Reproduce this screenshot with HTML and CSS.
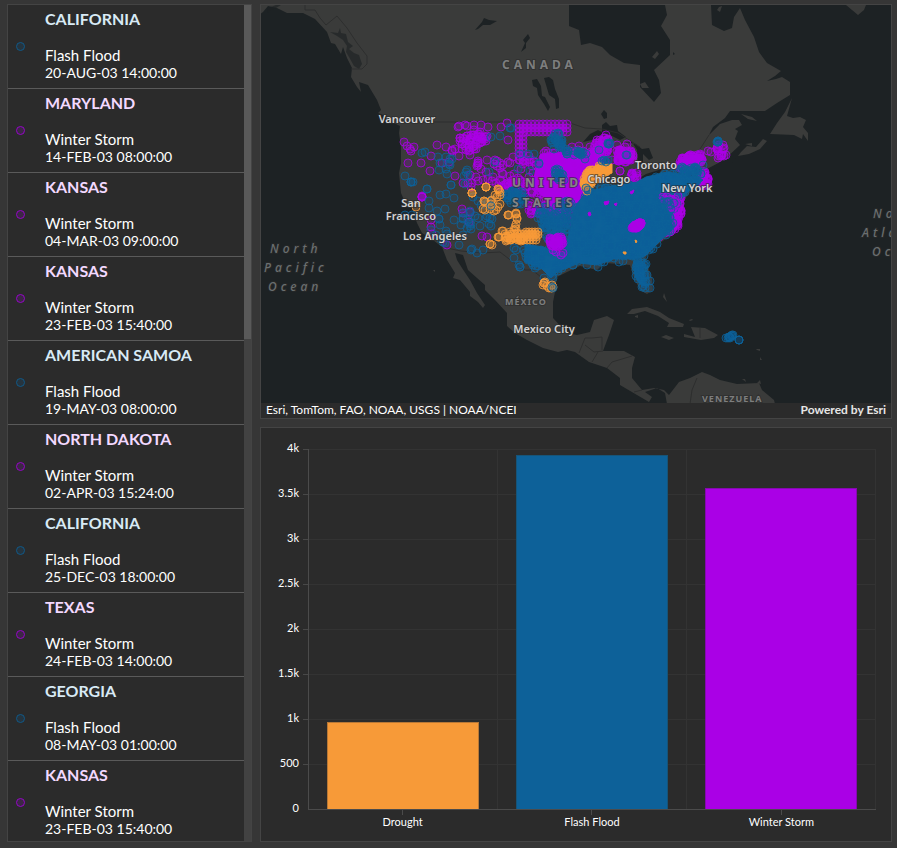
FILE: index.html
```html
<!DOCTYPE html>
<html lang="en">
<head>
<meta charset="utf-8">
<meta name="viewport" content="width=device-width, initial-scale=1">
<title>Storm Events</title>
<link rel="stylesheet" href="styles.css">
</head>
<body>
<main class="dashboard">
  <section class="panel events" aria-label="Events">
    <ul class="event-list">
      <li class="event flood"><span class="marker"></span><div><h2>CALIFORNIA</h2><p>Flash Flood</p><p class="date">20-AUG-03 14:00:00</p></div></li>
      <li class="event winter"><span class="marker"></span><div><h2>MARYLAND</h2><p>Winter Storm</p><p class="date">14-FEB-03 08:00:00</p></div></li>
      <li class="event winter"><span class="marker"></span><div><h2>KANSAS</h2><p>Winter Storm</p><p class="date">04-MAR-03 09:00:00</p></div></li>
      <li class="event winter"><span class="marker"></span><div><h2>KANSAS</h2><p>Winter Storm</p><p class="date">23-FEB-03 15:40:00</p></div></li>
      <li class="event flood"><span class="marker"></span><div><h2>AMERICAN SAMOA</h2><p>Flash Flood</p><p class="date">19-MAY-03 08:00:00</p></div></li>
      <li class="event winter"><span class="marker"></span><div><h2>NORTH DAKOTA</h2><p>Winter Storm</p><p class="date">02-APR-03 15:24:00</p></div></li>
      <li class="event flood"><span class="marker"></span><div><h2>CALIFORNIA</h2><p>Flash Flood</p><p class="date">25-DEC-03 18:00:00</p></div></li>
      <li class="event winter"><span class="marker"></span><div><h2>TEXAS</h2><p>Winter Storm</p><p class="date">24-FEB-03 14:00:00</p></div></li>
      <li class="event flood"><span class="marker"></span><div><h2>GEORGIA</h2><p>Flash Flood</p><p class="date">08-MAY-03 01:00:00</p></div></li>
      <li class="event winter"><span class="marker"></span><div><h2>KANSAS</h2><p>Winter Storm</p><p class="date">23-FEB-03 15:40:00</p></div></li>
    </ul>
    <div class="scroll-track"><div class="scroll-thumb"></div></div>
  </section>

  <section class="panel map" aria-label="Map">
    <svg class="map-view" viewBox="261 5 630 398" preserveAspectRatio="xMidYMid slice" role="img" aria-label="Storm events across North America">
      <g class="land">
        <path d="M250 5V22L263 12L268 6L277 8L287 13L303 13L315 19L327 32L331 43L335 44L341 54L343 47L347 58L352 68L351 77L357 87L361 92L359 82L368 85L377 100L381 110L378 113L386 116L392 122L400 126L399 133L401 147L401 163L399 173L401 193L407 207L412 208L417 223L422 233L433 240L442 247L447 260L455 273L453 278L460 280L470 292L470 296L478 302L483 308L485 305L477 293L470 280L462 268L457 260L455 253L463 255L468 270L477 278L485 285L485 290L495 300L507 313L507 326L515 333L527 340L543 348L558 352L567 350L575 352L589 362L607 368L620 378L620 385L637 395L649 402L652 397L645 392L657 388L665 393L667 404H775L774 400L762 390L759 383L737 384L720 380L710 375L702 372L690 378L679 382L669 395L664 390L654 388L642 390L632 378L632 368L635 357L624 351L603 351L609 335L614 320L607 316L594 320L590 332L577 335L567 333L553 318L553 302L555 292L557 277L567 272L580 266L597 270L604 263L620 264L630 265L634 278L640 290L647 294L653 290L652 278L647 265L646 257L657 245L667 238L677 230L683 208L684 200L692 190L712 183L705 170L724 160L740 145L735 139L738 131L735 129L742 125L739 120L732 120L720 124L709 135L713 127L725 118L730 111L765 111L777 103L790 95L790 82L782 77L776 79L767 81L775 76L781 71L767 63L759 52L754 37L745 20L740 8L734 17L732 28L724 31L712 25L711 5H665L667 15L661 26L670 40L670 55L654 70L659 80L661 93L654 102L640 87V65L624 63L610 55L602 47L590 43L581 45L579 30L569 26V5Z"/>
        <path d="M732 164L738 156L749 154L760 149L767 141L763 139L756 147L747 146L741 152ZM745 144L752 146L752 143ZM741 114L752 117L757 121L748 119ZM792 98L785 112L777 123L770 134L794 135L802 139L803 134L808 141V133L803 127L806 120L800 117L793 118L787 116ZM846 5L858 15L864 10L866 5ZM719 7L722 6L720 12L717 10ZM652 57L657 51L659 54L655 59ZM640 84L645 82L649 88L642 88ZM600 114l3-4 4 1v6l-4 2z"/>
        <path d="M627 314L632 309L647 307L660 312L669 318L684 324L683 327L667 327L669 323L658 316L645 311L634 314ZM661 337L666 335L674 338L669 340ZM684 334L695 337L691 327L705 328L718 335L714 338L701 340L684 337ZM635 316l3-1v3l-3-1zM663 297l1-4 3 9zM689 320l3-1 1 1-3 1zM756 349l4 0 0 2-3-1zM760 357l2 3-2 0zM433 270l2 0v2zM742 379l3 0 1 3zM757 383l3-3 1 4z"/>
      </g>
      <g class="water">
        <path d="M475 30L482 22L484 18L489 20L497 21L490 25L483 25L478 29ZM521 52L525 43L523 40L528 34L530 38L526 43L526 48ZM532 80L537 79L541 86L542 96L545 97L550 107L548 111L544 104L538 95L537 88L533 86ZM544 78L549 77L553 80L555 89L559 99V108L556 109L555 99L549 95Z"/>
        <path d="M583 142L590 134L598 130L602 132L602 125L606 122L610 126L617 125L618 131L626 137L620 140L610 135L600 136L592 140ZM621 142L636 144L642 149L649 148L653 158L649 160L643 154L643 164L638 164L637 150L632 142ZM638 179L646 174L662 169L658 175L645 182ZM601 114l3-4 3 3v5l-3 1zM673 52l2 2-2 1z"/>
        <path d="M268 8l8-3 5 0-5 3-5 2-4 3zM330 32l8 1 2-5 1 5 5 1 2 8 5 4-4 3 5 4 5 2 3 9-3 5-5-3-5-9-3-5 1-6-4-6-6-4z" opacity=".65"/>
      </g>
      <g class="borders">
        <path d="M305 5V10L315 10L320 18L326 25L337 16L347 28L357 43L367 56V64L362 69H351M400 122H567L585 128L602 129L618 133L640 147M442 247L461 251L482 253L500 252L513 262L525 270L532 270L545 280L555 291M579 353L585 338H592L602 337V350M585 345L594 352L603 351M607 368L612 362L632 356M592 362L598 352M690 404L692 390L697 378M700 328V338M709 135L693 160L675 160M642 390L634 392"/>
      </g>
      <g class="points" id="points"></g>
      <g class="labels">
        <g class="country">
          <text x="502" y="69">CANADA</text>
          <text x="512" y="187" class="us">UNITED</text>
          <text x="512" y="207" class="us">STATES</text>
        </g>
        <g class="country small"><text x="505" y="305">MÉXICO</text><text x="702" y="402">VENEZUELA</text></g>
        <g class="city">
          <text x="407" y="123">Vancouver</text><text x="411" y="207">San</text><text x="411" y="220">Francisco</text>
          <text x="435" y="240">Los Angeles</text><text x="609" y="183">Chicago</text><text x="656" y="169">Toronto</text>
          <text x="687" y="192">New York</text><text x="544" y="333">Mexico City</text>
        </g>
        <g class="ocean">
          <text x="270" y="253">North</text><text x="264" y="272">Pacific</text><text x="268" y="291">Ocean</text>
          <text x="873" y="218">North</text><text x="862" y="237">Atlantic</text><text x="872" y="256">Ocean</text>
        </g>
      </g>
    </svg>
    <footer class="attribution"><span>Esri, TomTom, FAO, NOAA, USGS | NOAA/NCEI</span><span class="powered">Powered by Esri</span></footer>
  </section>

  <section class="panel chart" aria-label="Events by type">
    <div class="y-labels"><span>4k</span><span>3.5k</span><span>3k</span><span>2.5k</span><span>2k</span><span>1.5k</span><span>1k</span><span>500</span><span>0</span></div>
    <div class="plot">
      <div class="gridlines"><i></i><i></i><i></i><i></i><i></i><i></i><i></i><i></i></div>
      <div class="bars">
        <div class="slot"><div class="bar drought" style="height:24.3%"></div></div>
        <div class="slot"><div class="bar flood" style="height:98.4%"></div></div>
        <div class="slot"><div class="bar winter" style="height:89.2%"></div></div>
      </div>
    </div>
    <div class="x-labels"><span>Drought</span><span>Flash Flood</span><span>Winter Storm</span></div>
  </section>
</main>
<script src="map.js"></script>
</body>
</html>
```
FILE: styles.css
```css
* { box-sizing: border-box; }

body {
  margin: 0;
  background: #363636;
  color: #fff;
  font-family: Lato, "Liberation Sans", sans-serif;
}

.dashboard {
  display: grid;
  grid-template-columns: 245px minmax(0, 1fr);
  grid-template-rows: minmax(0, 1fr) minmax(0, 1fr);
  gap: 8px;
  height: 100vh;
  padding: 4px 5px 6px 7px;
}

.panel {
  background: #2b2b2b;
  border: 1px solid #444;
  overflow: hidden;
}

.events {
  grid-row: 1 / 3;
  display: flex;
}

.event-list {
  flex: 1;
  margin: 0;
  padding: 0;
  list-style: none;
}

.event {
  display: flex;
  align-items: center;
  gap: 20px;
  padding: 5px 8px 6px;
  border-bottom: 1px solid #5a5a5a;
  font-size: 15px;
  line-height: 18px;
}

.event h2 {
  margin: 0 0 18px;
  font-size: 16px;
  font-weight: 700;
  line-height: 18px;
}

.event p { margin: 0; }
.event .date { font-size: 14px; }

.marker {
  width: 9px;
  height: 9px;
  border: 1px solid;
  border-radius: 50%;
}

.event.flood h2 { color: #d8eaf5; }
.event.winter h2 { color: #f3d9ff; }
.event.flood .marker { border-color: #105988; background: #26343e; }
.event.winter .marker { border-color: #9605c9; background: #3c2745; }

.scroll-track {
  width: 7px;
  background: #424242;
}

.scroll-thumb {
  height: 40%;
  background: #595959;
}

.map {
  display: flex;
  flex-direction: column;
  background: #1d2224;
}

.map-view {
  display: block;
  flex: 1;
  width: 100%;
  min-height: 0;
}

.land { fill: #3a3b3a; }
.water { fill: #1d2224; }
.borders { fill: none; stroke: #2d2e2e; stroke-width: 1; }

.points circle { fill-opacity: 0.18; stroke-width: 1; stroke-opacity: 0.8; }
.points .flood { fill: #0d6199; stroke: #0d6199; }
.points .winter { fill: #aa00e6; stroke: #aa00e6; }
.points .drought { fill: #f79a38; stroke: #f79a38; }
.points path { stroke: none; }

.labels { font-family: "Noto Sans", "Open Sans", sans-serif; }
.labels text { paint-order: stroke; stroke: #2b2b2b; stroke-width: 2px; stroke-opacity: 0.6; }
.country { fill: #7d7e7e; font-size: 12px; font-weight: 700; letter-spacing: 4px; }
.country .us { fill: #858585; }
.country.small { font-size: 9px; letter-spacing: 1px; }
.city { fill: #d4d4d4; font-size: 11px; font-weight: 600; text-anchor: middle; }
.ocean { fill: #6b6f70; font-size: 12px; font-style: italic; font-weight: 500; letter-spacing: 4px; }

.attribution {
  display: flex;
  justify-content: space-between;
  padding: 0 5px 1px;
  background: #2b2b2b;
  font-size: 12px;
  line-height: 14px;
}

.powered { font-weight: 700; color: #e6e6e6; }

.chart {
  display: grid;
  grid-template-columns: 47px minmax(0, 1fr);
  grid-template-rows: minmax(0, 1fr) auto;
  padding: 21px 15px 8px 0;
  font-size: 11px;
}

.y-labels {
  display: flex;
  flex-direction: column;
  justify-content: space-between;
  margin: -9px 9px -6px 0;
  line-height: 16px;
  text-align: right;
}

.plot {
  display: grid;
  border-left: 1px solid #4b4b4b;
  border-bottom: 1px solid #4b4b4b;
}

.gridlines, .bars { grid-area: 1 / 1; display: grid; }

.gridlines i {
  position: relative;
  border-top: 1px solid #333;
}

.gridlines i::before {
  content: "";
  position: absolute;
  top: -1px;
  left: -6px;
  width: 5px;
  height: 1px;
  background: #484848;
}

.bars { grid-template-columns: repeat(3, 1fr); z-index: 1; }

.slot {
  display: flex;
  align-items: flex-end;
  justify-content: center;
  border-right: 1px solid #333;
}

.bar { width: 81%; border: 1px solid; border-bottom: 0; }
.bar.drought { background: #f79a38; border-color: #b87836; }
.bar.flood { background: #0d6199; border-color: #165478; }
.bar.winter { background: #aa00e6; border-color: #8509af; }

.x-labels {
  grid-column: 2;
  display: grid;
  grid-template-columns: repeat(3, 1fr);
  line-height: 18px;
  text-align: center;
}

.x-labels span { padding-bottom: 2px; }

.x-labels span::before {
  content: "";
  display: block;
  width: 1px;
  height: 5px;
  margin: 0 auto -2px;
  background: #4b4b4b;
}
```
FILE: map.js
```js
const layer = document.getElementById("points");
const NS = "http://www.w3.org/2000/svg";

// Small deterministic generator so that the dots keep their places.
let seed = 7;
const rand = () => (seed = (seed * 16807) % 2147483647) / 2147483647;

function dot(kind, x, y) {
  const c = document.createElementNS(NS, "circle");
  c.setAttribute("class", kind);
  c.setAttribute("cx", x);
  c.setAttribute("cy", y);
  c.setAttribute("r", 4);
  layer.appendChild(c);
}

function pairs(text) {
  return text.split(" ").map(p => p.split(",").map(Number));
}

function inside(x, y, poly) {
  let hit = false;
  for (let i = 0, j = poly.length - 1; i < poly.length; j = i++) {
    const [xi, yi] = poly[i], [xj, yj] = poly[j];
    if ((yi > y) !== (yj > y) && x < (xj - xi) * (y - yi) / (yj - yi) + xi) hit = !hit;
  }
  return hit;
}

// Scatters `count` dots through a polygon.
function scatter(kind, text, count) {
  const poly = pairs(text);
  const xs = poly.map(p => p[0]), ys = poly.map(p => p[1]);
  const x0 = Math.min(...xs), w = Math.max(...xs) - x0;
  const y0 = Math.min(...ys), h = Math.max(...ys) - y0;
  for (let n = 0, tries = 0; n < count && tries < 20000; tries++) {
    const x = Math.round(x0 + rand() * w), y = Math.round(y0 + rand() * h);
    if (inside(x, y, poly)) { dot(kind, x, y); n++; }
  }
}

function solid(kind, text) {
  const p = document.createElementNS(NS, "path");
  p.setAttribute("class", kind);
  p.setAttribute("d", "M" + text.replace(/ /g, "L") + "Z");
  layer.appendChild(p);
}

function lattice(kind, x0, y0, x1, y1, step) {
  for (let y = y0; y <= y1; y += step) for (let x = x0; x <= x1; x += step) dot(kind, x, y);
}

const dots = (kind, text) => pairs(text).forEach(([x, y]) => dot(kind, x, y));

// Winter storms
dots("winter", "404,142 407,146 410,149 414,147 411,151 437,145 408,163 421,163 431,156 430,171 446,147 452,150 455,149 442,163 449,162 455,176 487,160 494,164 500,163 478,163 477,166 486,172 500,168 503,174 508,162 501,127 507,123 508,140 476,177 470,175 468,183 463,183 478,181 493,177 422,197 422,197 422,196 422,197 422,197 431,220 431,227 432,234 447,245 462,209 463,213 469,222 482,236 487,237 470,212 520,160 513,157 510,163 458,127 459,126 465,125 467,126 474,125 481,125 488,127 474,130 460,138 452,151 459,156");
scatter("winter", "468,134 482,130 490,135 487,142 479,144 478,153 467,158 462,152 458,148 460,137", 50);
dots("winter", "478,161 478,165 495,160 497,161 503,165 497,166 502,173 472,183 471,187 478,163 481,169");
lattice("winter", 519, 124, 568, 135, 4);
lattice("winter", 519, 136, 526, 163, 4);
solid("winter", "541,154 570,152 600,149 604,160 590,180 582,195 575,213 568,203 548,202 537,190 532,184 537,167");
scatter("winter", "516,162 541,150 573,144 603,149 603,163 582,193 575,215 540,216 528,195 505,186 510,172 525,175", 215);
scatter("winter", "478,178 515,180 518,192 500,188", 18);
scatter("winter", "526,200 548,200 575,222 560,226 545,212 530,215", 50);
scatter("winter", "595,139 608,136 610,145 607,156 594,154", 40);
scatter("winter", "617,151 622,148 632,150 634,159 625,163 618,161", 65);
scatter("winter", "630,172 638,172 638,181 630,181", 12);
dots("winter", "606,135 604,138 617,145 627,144 625,147 620,171 620,171 612,160");
scatter("winter", "680,158 690,154 701,154 703,162 690,168 680,170", 100);
scatter("winter", "700,170 708,173 709,184 702,188", 40);
scatter("winter", "713,147 719,144 724,146 725,156 718,157", 15);
dots("winter", "708,151 711,152 726,155 718,158 723,145");
scatter("winter", "682,194 682,210 678,228 664,238 656,238 668,217 674,194", 100);

// Flash floods
dots("flood", "405,176 422,153 425,152 427,189 427,189 429,201 438,157 440,163 446,169 447,174 450,159 446,157 439,170 449,164 450,165 452,159 411,182 411,182 411,182 413,182 440,195 446,194 451,185 454,198 429,208 437,211 445,209 412,215 439,219 439,219 431,230 440,225 446,231 447,234 451,185 454,220 461,225 465,184 466,172 464,176 468,175 467,170 470,223 475,216 478,218 463,235 459,245 472,249 471,250 477,253 483,250 492,219 491,226 480,226 487,216 471,224 473,197 470,211 463,213 441,239 445,243 443,242 436,235 491,137 500,136 510,128 511,128 489,172 495,162 518,169 520,154 528,154 534,154 539,163 539,164 530,171 405,215 514,258 519,265 520,267 514,248 516,250 718,142 718,141 718,142 717,142 718,141 718,142");
scatter("flood", "457,200 494,200 488,232 463,228", 14);
scatter("flood", "505,190 520,190 527,196 526,206 508,203", 45);
scatter("flood", "549,133 558,130 563,142 564,150 553,150", 30);
scatter("flood", "564,148 584,152 580,157 566,154", 20);
scatter("flood", "551,171 559,168 566,180 560,182", 18);
scatter("flood", "535,208 570,200 578,220 540,230", 55);
solid("flood", "586,192 612,186 637,182 646,177 668,172 694,177 703,180 689,191 679,200 671,216 672,230 662,239 654,247 645,256 633,259 613,259 597,265 579,263 557,272 551,278 541,268 525,262 525,244 543,247 565,254 568,237 572,225 574,208");
scatter("flood", "580,194 590,186 612,185 637,184 646,177 668,172 696,178 704,180 687,192 677,206 671,216 672,230 662,239 654,247 643,254 633,258 613,260 597,265 579,263 557,272 551,278 541,268 525,262 523,244 543,247 565,254 568,237 572,225 574,208", 440);
scatter("flood", "545,213 573,212 568,237 548,242 543,230", 75);
dots("flood", "520,267 528,260 535,268 544,278 553,278 587,265 598,267 604,262 619,262 623,261 657,244 653,249 644,256 637,260 641,261 645,265 637,266");
solid("flood", "634,261 643,262 644,274 646,286 642,286 635,277");
scatter("flood", "635,260 644,260 645,274 647,287 642,286 636,276", 32);
dots("flood", "647,275 650,281 650,288 645,288 642,287 638,279 646,264");
scatter("flood", "677,164 690,168 697,166 704,175 686,177", 34);
dots("flood", "677,170 679,172 703,165 608,144 609,144 610,143 609,144 608,143 599,150 626,155 627,155 586,154 581,155 585,159 606,162 604,161 603,164 562,257 568,251 564,247 557,244");
dots("flood", "726,338 729,337 731,336 732,335 733,335 730,338 728,338 729,337 732,336 730,337 739,340 739,340 739,340");

// Winter storms that lie over the flood area
scatter("winter", "548,238 562,236 564,244 556,248 548,244", 50);
dots("winter", "556,252 563,253 553,250 561,255");
scatter("winter", "660,195 679,194 678,213 668,208", 18);
scatter("winter", "633,226 641,222 642,224 636,229 632,228", 50);
scatter("flood", "658,198 674,200 675,225 662,236", 22);
solid("winter", "588,213 590,212 591,215 589,216");
solid("winter", "604,202 609,201 608,204 605,205");
solid("winter", "630,192 634,190 633,193 631,194");
solid("winter", "614,204 617,203 616,206");

// Droughts
dots("drought", "472,193 472,193 472,193 472,193 486,187 486,187 486,187 486,187 498,189 498,189 499,190 500,192 500,195 495,195 484,201 484,201 485,202 492,200 491,201 497,197 500,204 498,207 483,209 485,210 490,209 494,211 496,210 491,204 492,206 508,215 508,215 509,215 516,213 516,214 516,214 517,218 517,219 516,224 515,227 514,230 516,229 503,231 502,231 499,237 499,237 498,237 490,244 490,244 492,245 506,241 507,240 505,234 508,238 511,234 513,238 510,232 416,207");
lattice("drought", 518, 234, 538, 242, 3);
lattice("drought", 526, 232, 538, 235, 3);
scatter("drought", "504,235 518,232 525,242 506,242", 20);
solid("drought", "581,179 590,173 595,166 608,164 612,164 612,173 600,178 590,187 583,189 580,185");
scatter("drought", "583,177 595,165 607,166 607,173 593,182 589,188 583,188", 90);
dots("drought", "544,283 543,285 547,286 549,288 552,285 551,288 553,287 545,282 544,283 552,288 587,191");
dots("flood", "604,160 606,162 608,160 602,161 586,188 588,190 491,206 552,287 553,288");
solid("drought", "623,252 626,252 626,254 624,254");
solid("drought", "635,240 637,241 636,243");
```
